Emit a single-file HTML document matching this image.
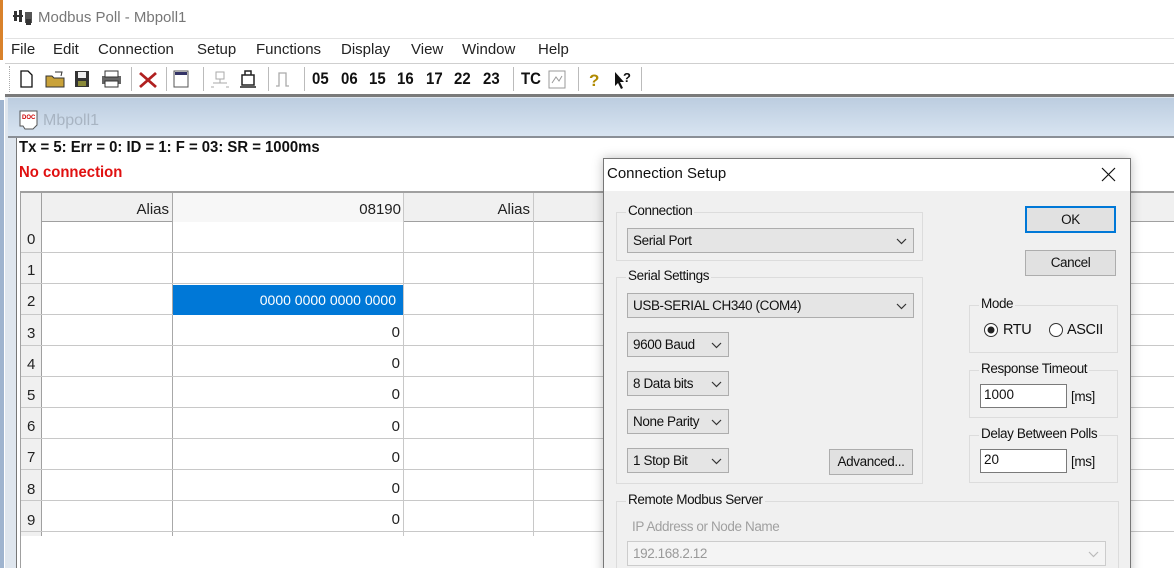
<!DOCTYPE html>
<html><head><meta charset="utf-8"><style>
*{margin:0;padding:0;box-sizing:border-box}
html,body{width:1174px;height:568px;overflow:hidden}
body{background:#fff;font-family:"Liberation Sans",sans-serif;position:relative}
.a{position:absolute}
.t{position:absolute;white-space:nowrap}
.m{position:absolute;top:41px;font-size:15px;color:#222;white-space:nowrap}
.combo{position:absolute;background:#e5e5e5;border:1px solid #adadad;height:25px;font-size:13.5px;letter-spacing:-0.4px;padding:4px 0 0 5px;color:#111;white-space:nowrap}
.combo svg{position:absolute;right:6px;top:9px}
.grp{position:absolute;border:1px solid #dcdcdc}
.gl{position:absolute;background:#f0f0f0;padding:0 2px;font-size:13.5px;letter-spacing:-0.4px;top:-10px;left:9px;color:#111;white-space:nowrap}
.btn{position:absolute;background:#e1e1e1;border:1px solid #adadad;font-size:13.5px;letter-spacing:-0.4px;text-align:center;padding-top:4px;color:#111}
.inp{position:absolute;background:#fff;border:1px solid #7a7a7a;font-size:13.5px;padding:2px 0 0 3px;color:#111}
.dt{position:absolute;font-size:13.5px;letter-spacing:-0.4px;color:#111;white-space:nowrap}
.tb{position:absolute;top:69px;font-weight:bold;font-size:17px;color:#111;transform:scaleX(.88);transform-origin:left;white-space:nowrap}
.sep{position:absolute;top:67px;width:1px;height:24px;background:#bbb}
</style></head><body>
<div class="a" style="left:0;top:0;width:3px;height:60px;background:#d9822b"></div>
<div class="a" style="left:0;top:100px;width:4px;height:468px;background:#9fb4cf"></div>
<svg class="a" style="left:13px;top:9px" width="22" height="18"><rect x="1" y="2" width="3" height="10" fill="#333"/><rect x="6" y="1" width="3" height="12" fill="#333"/><rect x="0" y="6" width="10" height="2" fill="#333"/><rect x="12" y="3" width="7" height="11" fill="#555"/><rect x="13" y="10" width="5" height="6" fill="#333"/></svg>
<div class="t" style="left:38px;top:9px;font-size:15px;color:#777">Modbus Poll - Mbpoll1</div>
<div class="a" style="left:5px;top:38px;width:1169px;height:1px;background:#e2e2e2"></div>
<div class="m" style="left:11px">File</div><div class="m" style="left:53px">Edit</div><div class="m" style="left:98px">Connection</div><div class="m" style="left:197px">Setup</div><div class="m" style="left:256px">Functions</div><div class="m" style="left:341px">Display</div><div class="m" style="left:411px">View</div><div class="m" style="left:462px">Window</div><div class="m" style="left:538px">Help</div>
<div class="a" style="left:5px;top:63px;width:1169px;height:1px;background:#cfcfcf"></div>
<div class="a" style="left:9px;top:66px;width:1px;height:26px;border-left:1px dotted #aaa"></div>
<svg class="a" style="left:14px;top:68px" width="290" height="22">
<path d="M7 3h7l4 4v12H7z" fill="#fff" stroke="#111" stroke-width="1.3"/>
<path d="M32 8h6l2 2h10v9H32z" fill="#c9a23a" stroke="#333"/><path d="M41 4h7l-1 4" fill="none" stroke="#333"/>
<rect x="61" y="3" width="14" height="16" fill="#333"/><rect x="64" y="4" width="8" height="6" fill="#eee"/><rect x="64" y="13" width="8" height="5" fill="#8a8a3a"/>
<rect x="88" y="8" width="19" height="8" fill="#666"/><rect x="91" y="3" width="13" height="6" fill="#fff" stroke="#333"/><rect x="91" y="13" width="13" height="6" fill="#fff" stroke="#333"/>
<path d="M126 5l16 14M142 5l-16 14" stroke="#b02020" stroke-width="2.8"/>
<rect x="160" y="3" width="14" height="16" fill="#fff" stroke="#555"/><rect x="161" y="4" width="12" height="3" fill="#336"/>
<path d="M202 4h8v7h-8zM206 11v4M199 15h14M197 19h3M212 19h3" fill="none" stroke="#aaa"/>
<path d="M231 3h6v4h-6zM228 7h12v10h-12zM226 19h16" fill="none" stroke="#222" stroke-width="1.5"/>
<path d="M262 18h3V5h7v13h3" fill="none" stroke="#aaa" stroke-width="1.3"/>
</svg>
<div class="sep" style="left:131px"></div><div class="sep" style="left:166px"></div><div class="sep" style="left:203px"></div><div class="sep" style="left:268px"></div><div class="sep" style="left:304px"></div>
<div class="tb" style="left:312px">05</div><div class="tb" style="left:341px">06</div><div class="tb" style="left:369px">15</div><div class="tb" style="left:397px">16</div><div class="tb" style="left:426px">17</div><div class="tb" style="left:454px">22</div><div class="tb" style="left:483px">23</div>
<div class="sep" style="left:513px"></div>
<div class="tb" style="left:521px">TC</div>
<svg class="a" style="left:546px;top:69px" width="94" height="22"><rect x="3" y="2" width="16" height="17" fill="#fff" stroke="#999"/><path d="M6 14l4-6 3 4 3-5" fill="none" stroke="#999"/>
<text x="43" y="17" font-family="Liberation Sans" font-weight="bold" font-size="17" fill="#b08a00">?</text>
<path d="M69 3l0 14 3-3 3 6 2-1-3-6h4z" fill="#111"/><text x="77" y="13" font-family="Liberation Sans" font-weight="bold" font-size="13" fill="#111">?</text></svg>
<div class="sep" style="left:578px"></div>
<div class="sep" style="left:641px"></div>
<div class="a" style="left:5px;top:94px;width:1169px;height:3px;background:#7a7a7a"></div>
<div class="a" style="left:5px;top:97px;width:1169px;height:471px;background:#dfe6ee"></div>
<div class="a" style="left:8px;top:98px;width:1166px;height:38px;background:linear-gradient(#bccde0,#d8e4f1)"></div>
<svg class="a" style="left:19px;top:110px" width="20" height="20"><path d="M1 1h17v14l-4 4H6l-2-3H1z" fill="#fff" stroke="#555"/><text x="3" y="9" font-size="6" font-family="Liberation Sans" fill="#c00" font-weight="bold">DOC</text></svg>
<div class="t" style="left:43px;top:112px;font-size:16px;color:#a8b4c2">Mbpoll1</div>
<div class="a" style="left:8px;top:136px;width:1166px;height:2px;background:#8a8f96"></div>
<div class="a" style="left:16px;top:138px;width:1158px;height:430px;background:#fff;border-left:1px solid #777"></div>
<div class="t" style="left:19px;top:139px;font-size:16px;font-weight:bold;color:#111;transform:scaleX(.93);transform-origin:left">Tx = 5: Err = 0: ID = 1: F = 03: SR = 1000ms</div>
<div class="t" style="left:19px;top:164px;font-size:16px;font-weight:bold;color:#e01010;transform:scaleX(.93);transform-origin:left">No connection</div>
<div class="a" style="left:20px;top:191px;width:1154px;height:377px;border-top:2px solid #a0a0a0;border-left:1px solid #a0a0a0"></div>
<div class="a" style="left:21px;top:193px;width:1153px;height:29px;background:#f0f0f0;border-bottom:1px solid #a0a0a0"></div>
<div class="a" style="left:21px;top:193px;width:21px;height:343px;background:#f0f0f0;border-right:1px solid #a0a0a0"></div>
<div class="a" style="left:172px;top:193px;width:1px;height:343px;background:#a8a8a8"></div>
<div class="a" style="left:403px;top:193px;width:1px;height:343px;background:#c8c8c8"></div>
<div class="a" style="left:533px;top:193px;width:1px;height:343px;background:#c8c8c8"></div>
<div class="a" style="left:173px;top:193px;width:230px;height:29px;background:#f7f7f7"></div>
<div class="t" style="left:42px;top:201px;width:127px;text-align:right;font-size:15px;color:#222">Alias</div>
<div class="t" style="left:173px;top:201px;width:228px;text-align:right;font-size:15px;color:#222">08190</div>
<div class="t" style="left:404px;top:201px;width:126px;text-align:right;font-size:15px;color:#222">Alias</div>
<div class="a" style="left:21px;top:222px;width:1153px;height:314px;background:repeating-linear-gradient(to bottom,transparent 0,transparent 30px,#c8c8c8 30px,#c8c8c8 31px)"></div>
<div class="a" style="left:173px;top:285px;width:230px;height:30px;background:#0078d7"></div>
<div class="t" style="left:173px;top:292px;width:223px;text-align:right;font-size:14px;color:#fff">0000 0000 0000 0000</div>
<div class="t" style="left:27px;top:224px;font-size:15px;line-height:31.2px;color:#222">0<br>1<br>2<br>3<br>4<br>5<br>6<br>7<br>8<br>9</div>
<div class="t" style="left:380px;top:317px;width:20px;text-align:right;font-size:15px;line-height:31.2px;color:#222">0<br>0<br>0<br>0<br>0<br>0<br>0</div>
<div class="a" style="left:603px;top:158px;width:528px;height:420px;background:#f0f0f0;border:1px solid #777;box-shadow:0 0 10px rgba(0,0,0,.25)"></div>
<div class="a" style="left:604px;top:159px;width:526px;height:32px;background:#fff"></div>
<div class="t" style="left:607px;top:165px;font-size:15px;color:#111">Connection Setup</div>
<svg class="a" style="left:1101px;top:167px" width="15" height="15"><path d="M1 1l13 13M14 1L1 14" stroke="#111" stroke-width="1.2"/></svg>
<div class="grp" style="left:616px;top:212px;width:307px;height:49px"><div class="gl">Connection</div></div>
<div class="combo" style="left:627px;top:228px;width:287px">Serial Port<svg width="11" height="7"><path d="M1 1l4.5 4.5L10 1" fill="none" stroke="#333" stroke-width="1.2"/></svg></div>
<div class="btn" style="left:1025px;top:206px;width:91px;height:27px;border:2px solid #0078d7">OK</div>
<div class="btn" style="left:1025px;top:250px;width:91px;height:26px">Cancel</div>
<div class="grp" style="left:616px;top:277px;width:307px;height:207px"><div class="gl">Serial Settings</div></div>
<div class="combo" style="left:627px;top:293px;width:287px">USB-SERIAL CH340 (COM4)<svg width="11" height="7"><path d="M1 1l4.5 4.5L10 1" fill="none" stroke="#333" stroke-width="1.2"/></svg></div>
<div class="combo" style="left:627px;top:332px;width:102px">9600 Baud<svg width="11" height="7"><path d="M1 1l4.5 4.5L10 1" fill="none" stroke="#333" stroke-width="1.2"/></svg></div>
<div class="combo" style="left:627px;top:371px;width:102px">8 Data bits<svg width="11" height="7"><path d="M1 1l4.5 4.5L10 1" fill="none" stroke="#333" stroke-width="1.2"/></svg></div>
<div class="combo" style="left:627px;top:409px;width:102px">None Parity<svg width="11" height="7"><path d="M1 1l4.5 4.5L10 1" fill="none" stroke="#333" stroke-width="1.2"/></svg></div>
<div class="combo" style="left:627px;top:448px;width:102px">1 Stop Bit<svg width="11" height="7"><path d="M1 1l4.5 4.5L10 1" fill="none" stroke="#333" stroke-width="1.2"/></svg></div>
<div class="btn" style="left:829px;top:449px;width:84px;height:26px">Advanced...</div>
<div class="grp" style="left:969px;top:305px;width:149px;height:48px"><div class="gl">Mode</div></div>
<svg class="a" style="left:983px;top:322px" width="80" height="16"><circle cx="8" cy="8" r="6.5" fill="#fff" stroke="#333"/><circle cx="8" cy="8" r="3.5" fill="#222"/><circle cx="73" cy="8" r="6.5" fill="#fff" stroke="#333"/></svg>
<div class="dt" style="left:1003px;top:322px;font-size:14.5px">RTU</div>
<div class="dt" style="left:1067px;top:322px;font-size:14.5px">ASCII</div>
<div class="grp" style="left:969px;top:370px;width:149px;height:48px"><div class="gl">Response Timeout</div></div>
<div class="inp" style="left:980px;top:384px;width:87px;height:24px">1000</div>
<div class="dt" style="left:1071px;top:389px">[ms]</div>
<div class="grp" style="left:969px;top:435px;width:149px;height:48px"><div class="gl">Delay Between Polls</div></div>
<div class="inp" style="left:980px;top:449px;width:87px;height:24px">20</div>
<div class="dt" style="left:1071px;top:454px">[ms]</div>
<div class="grp" style="left:616px;top:501px;width:503px;height:80px"><div class="gl">Remote Modbus Server</div></div>
<div class="dt" style="left:632px;top:519px;color:#a0a0a0">IP Address or Node Name</div>
<div class="combo" style="left:627px;top:541px;width:479px;background:#f4f4f4;border-color:#ccc;color:#999">192.168.2.12<svg width="11" height="7"><path d="M1 1l4.5 4.5L10 1" fill="none" stroke="#bbb" stroke-width="1.2"/></svg></div>
</body></html>
